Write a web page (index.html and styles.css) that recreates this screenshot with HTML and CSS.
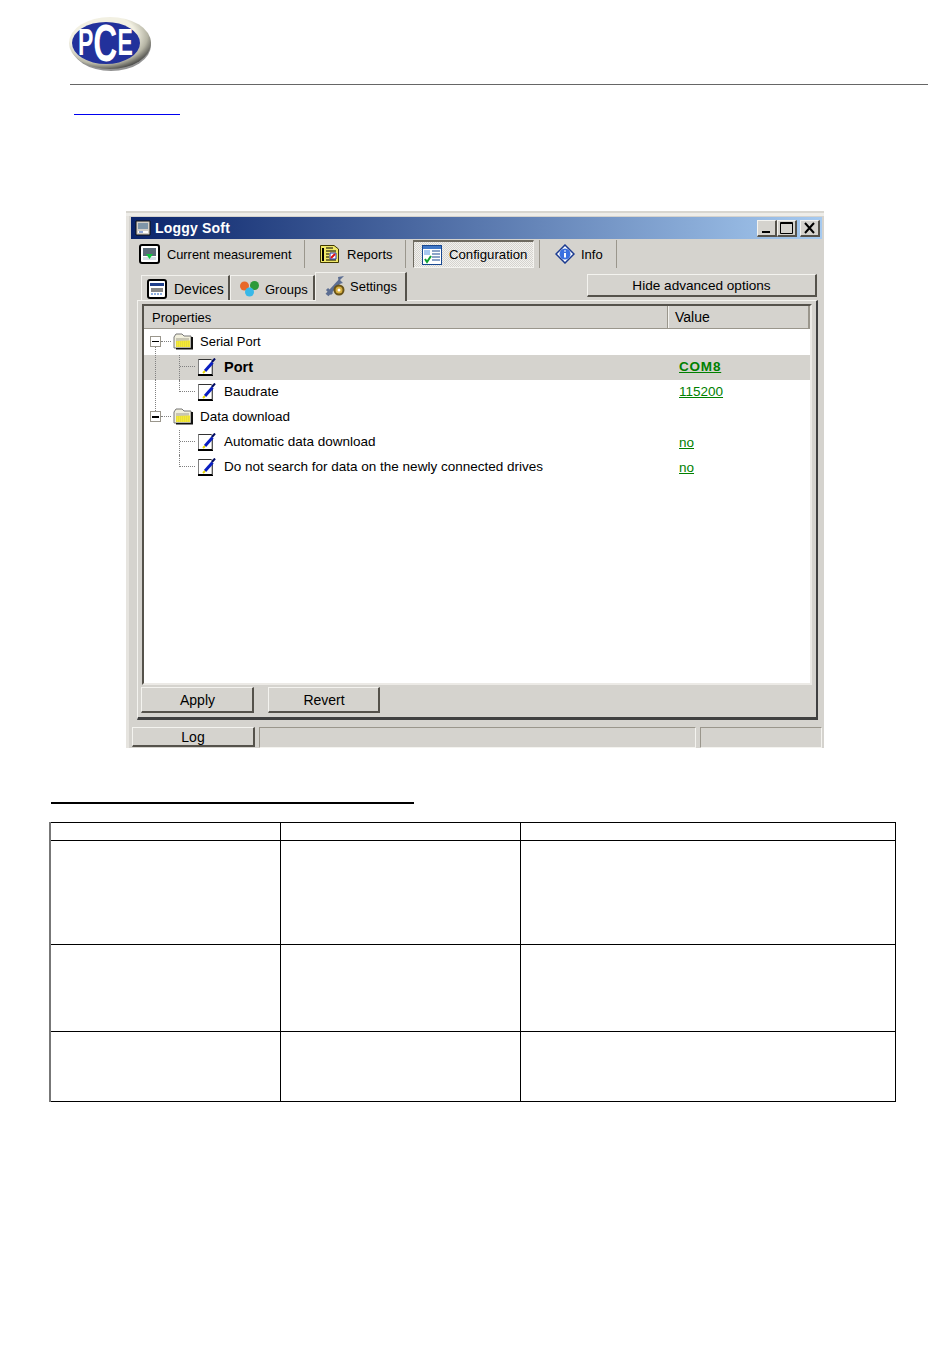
FILE: index.html
```html
<!DOCTYPE html>
<html lang="en">
<head>
<meta charset="utf-8">
<title>Loggy Soft</title>
<link rel="stylesheet" href="styles.css">
</head>
<body>
<svg class="defs" width="0" height="0" aria-hidden="true">
  <defs>
    <symbol id="doc" viewBox="0 0 18 18">
      <path d="M0.500 1.500H14V16.500H0.500Z" fill="#fff" stroke="#808080"/>
      <path d="M0 17H15" stroke="#000" stroke-width="2"/>
      <path d="M14.500 5V17" stroke="#555"/>
      <path d="M0.500 1.500H13" stroke="#333"/>
      <path d="M7 13L14.500 4.500" stroke="#0a1fc0" stroke-width="3"/>
      <path d="M14 4L17 0.500" stroke="#000a60" stroke-width="2"/>
      <path d="M5 15L7 13" stroke="#e8d800" stroke-width="2"/>
    </symbol>
    <symbol id="folder" viewBox="0 0 20 17">
      <path d="M1 4L3 1H9L11 3H18V15H1Z" fill="#f1efdc" stroke="#777"/>
      <path d="M3 5H16V8H3Z" fill="#c8c6b4"/>
      <path d="M3 8L17 7.500V14H3Z" fill="#f5ea35"/>
      <path d="M3 9H17M3 11H17M3 13H17" stroke="#d8cf40" stroke-dasharray="1 1"/>
      <path d="M18 4H20V16.500H3V15H18Z" fill="#111"/>
    </symbol>
  </defs>
</svg>

<header class="doc-head">
  <svg class="logo" width="120" height="60" viewBox="0 0 120 60" role="img" aria-label="PCE">
    <defs>
      <radialGradient id="rim" cx="40%" cy="35%" r="68%">
        <stop offset="0.6" stop-color="#f2f0e2"/>
        <stop offset="0.82" stop-color="#b5b4a4"/>
        <stop offset="1" stop-color="#4a4a48"/>
      </radialGradient>
    </defs>
    <ellipse cx="43" cy="30" rx="40" ry="26" fill="#3a3a3a" opacity=".55"/>
    <ellipse cx="42" cy="28" rx="41" ry="26" fill="url(#rim)"/>
    <ellipse cx="38" cy="28" rx="34" ry="21" fill="#22319b"/>
    <text class="logo-text" transform="translate(10 40) scale(.64 1)">P<tspan class="logo-big" dy="6">C</tspan><tspan dy="-6">E</tspan></text>
  </svg>
  <hr class="head-rule">
  <a class="head-link" href="#" aria-label="link"></a>
</header>

<main class="shot">
  <div class="window">
    <div class="titlebar">
      <svg class="app-icon" width="16" height="16" viewBox="0 0 16 16"><path d="M1 1H15V15H1Z" fill="#d4d0c8" stroke="#111"/><path d="M3 3H13V9H3Z" fill="#7f96a8"/><path d="M3 11H13V13H3Z" fill="#fff"/><path d="M4 12H8" stroke="#2050b0"/></svg>
      <span class="title">Loggy Soft</span>
      <div class="winbtns">
        <button class="winbtn"><svg width="17" height="14" viewBox="0 0 17 14"><path d="M4 11H12" stroke="#000" stroke-width="2"/></svg></button>
        <button class="winbtn"><svg width="17" height="14" viewBox="0 0 17 14"><path d="M2.500 1.500H14.500V12.500H2.500Z M2 2.500H15" fill="none" stroke="#000"/></svg></button>
        <button class="winbtn gap"><svg width="17" height="14" viewBox="0 0 17 14"><path d="M4 2L13 12M13 2L4 12" stroke="#000" stroke-width="2"/></svg></button>
      </div>
    </div>

    <nav class="toolbar">
      <div class="tool t-current">
        <svg width="21" height="20" viewBox="0 0 21 20"><rect x="1" y="1" width="19" height="18" rx="2" fill="#fff" stroke="#000" stroke-width="2"/><path d="M4 4H17V12H4Z" fill="#5a6a78"/><path d="M4 13H17V16H4Z" fill="#d8e0e8"/><path d="M7 10H14L10.500 15Z" fill="#10c040"/></svg>
        <span>Current measurement</span>
      </div>
      <div class="tool t-reports">
        <svg width="21" height="20" viewBox="0 0 21 20"><path d="M1.500 1.500H15L19.500 5V18.500H1.500Z" fill="#f0e868" stroke="#403800"/><path d="M4 4V17" stroke="#000" stroke-width="2"/><path d="M7 4H14M7 7H17M7 10H10M7 13H10M7 16H17" stroke="#000"/><path d="M11 9H17V15H11Z" fill="#fff" stroke="#2030b0"/><path d="M12 14L16 10" stroke="#e01010" stroke-width="2"/></svg>
        <span>Reports</span>
      </div>
      <div class="tool t-config">
        <svg width="20" height="20" viewBox="0 0 20 20"><rect x="0.500" y="0.500" width="19" height="19" fill="#fff" stroke="#184890"/><path d="M1 1H19V4H1Z" fill="#4078c8"/><path d="M2 5H8V10H2Z" fill="#a8c8f0"/><path d="M10 6H18M10 9H18M10 12H18M10 15H18" stroke="#184890"/><path d="M3 14L5 17L9 11" fill="none" stroke="#10a030" stroke-width="2"/></svg>
        <span>Configuration</span>
      </div>
      <div class="tool t-info">
        <svg width="20" height="20" viewBox="0 0 20 20"><path d="M10 1L19 10L10 19L1 10Z" fill="#fff" stroke="#1a3a90" stroke-width="1.500"/><circle cx="10" cy="10" r="5.500" fill="#3a70e0"/><path d="M10 6.500V7.500M10 9V13.500" stroke="#fff" stroke-width="2"/></svg>
        <span>Info</span>
      </div>
    </nav>

    <div class="tabrow">
      <div class="tab tab-devices">
        <svg width="20" height="20" viewBox="0 0 20 20"><rect x="1" y="1" width="18" height="18" rx="2" fill="#fff" stroke="#000" stroke-width="2"/><path d="M3 4H17V7H3Z" fill="#20408c"/><path d="M4 9H16V13H4Z" fill="#888"/><path d="M4 15H16" stroke="#2060c0" stroke-dasharray="2 1"/></svg>
        <span>Devices</span>
      </div>
      <div class="tab tab-groups">
        <svg width="21" height="18" viewBox="0 0 21 18"><circle cx="5.500" cy="6" r="4.500" fill="#e8682a"/><circle cx="15.500" cy="5.500" r="4.500" fill="#2e9a3a"/><circle cx="10.500" cy="12" r="4.500" fill="#38b8e8"/></svg>
        <span>Groups</span>
      </div>
      <div class="tab tab-settings">
        <svg width="21" height="23" viewBox="0 0 21 23"><path d="M2 20L15 6" stroke="#5c6e92" stroke-width="4"/><path d="M13 2L19 1L15 5L18 8L14 9Z" fill="#5c6e92"/><path d="M2 14L7 19" stroke="#5c6e92" stroke-width="3"/><circle cx="14" cy="15" r="4.500" fill="#d8b040" stroke="#6a5418" stroke-width="2"/><circle cx="14" cy="15" r="1.500" fill="#fff"/></svg>
        <span>Settings</span>
      </div>
      <button class="btn btn-advanced">Hide advanced options</button>
    </div>

    <section class="panel">
      <div class="list">
        <div class="list-head">
          <div class="col-prop">Properties</div>
          <div class="col-val">Value</div>
        </div>
        <div class="tree">
          <div class="row root first">
            <div class="name"><span class="exp"></span><svg class="fold" width="20" height="17"><use href="#folder"/></svg><span class="label-root narrow">Serial Port</span></div>
          </div>
          <div class="row sel">
            <div class="name"><span class="trunk on"></span><span class="elbow"></span><svg class="item" width="18" height="18"><use href="#doc"/></svg><span class="label strong">Port</span></div>
            <div class="val strong-val"><a href="#">COM8</a></div>
          </div>
          <div class="row">
            <div class="name"><span class="trunk on"></span><span class="elbow last"></span><svg class="item" width="18" height="18"><use href="#doc"/></svg><span class="label">Baudrate</span></div>
            <div class="val"><a href="#">115200</a></div>
          </div>
          <div class="row root second">
            <div class="name"><span class="exp"></span><svg class="fold" width="20" height="17"><use href="#folder"/></svg><span class="label-root">Data download</span></div>
          </div>
          <div class="row">
            <div class="name"><span class="trunk"></span><span class="elbow"></span><svg class="item" width="18" height="18"><use href="#doc"/></svg><span class="label">Automatic data download</span></div>
            <div class="val val-no"><a href="#">no</a></div>
          </div>
          <div class="row">
            <div class="name"><span class="trunk"></span><span class="elbow last"></span><svg class="item" width="18" height="18"><use href="#doc"/></svg><span class="label">Do not search for data on the newly connected drives</span></div>
            <div class="val val-no"><a href="#">no</a></div>
          </div>
        </div>
      </div>
      <div class="actions">
        <button class="btn btn-act">Apply</button>
        <button class="btn btn-act">Revert</button>
      </div>
    </section>

    <footer class="status">
      <button class="btn btn-log">Log</button>
      <div class="well well-main"></div>
      <div class="well well-side"></div>
    </footer>
  </div>
</main>

<h2 class="blank-heading" aria-hidden="true"></h2>

<table class="spec">
  <tr class="r0"><td class="c1"></td><td class="c2"></td><td class="c3"></td></tr>
  <tr class="r1"><td></td><td></td><td></td></tr>
  <tr class="r2"><td></td><td></td><td></td></tr>
  <tr class="r3"><td></td><td></td><td></td></tr>
</table>
</body>
</html>
```

FILE: styles.css
```css
* { box-sizing: border-box; }
html, body { margin: 0; padding: 0; background: #fff; }
body { width: 950px; height: 1361px; overflow: hidden; font-family: "Liberation Sans", Arial, sans-serif; font-size: 14px; color: #000; }
.defs { display: block; height: 0; }
svg { display: block; flex: none; }

.doc-head { height: 211px; padding-top: 15px; }
.logo { margin-left: 68px; height: 60px; }
.logo-text { font-family: "Liberation Sans", Arial, sans-serif; font-weight: 700; font-size: 36px; fill: #fff; }
.logo-big { font-size: 52px; }
.head-rule { height: 1px; border: 0; background: #666; margin: 9px 22px 0 70px; }
.head-link { display: block; width: 106px; height: 1px; margin: 29px 0 0 74px; background: #0000f0; }

.shot { padding-left: 126px; }
.window { width: 698px; height: 537px; padding: 4px 2px 0 5px; background: #d5d3ce; border-top: 2px solid #d8d6d0; box-shadow: inset 0 3px 0 #eeede9, inset 3px 0 0 #e6e4df; }

.titlebar { display: flex; align-items: center; height: 22px; padding-left: 4px; background: linear-gradient(90deg, #0a246a, #a6caf0); color: #fff; }
.title { margin-left: 4px; font-weight: 700; font-size: 14px; letter-spacing: .2px; }
.winbtns { display: flex; margin-left: auto; padding-right: 2px; }
.winbtn { display: flex; width: 20px; height: 17px; padding: 0; background: #d5d3ce; border: 1px solid; border-color: #f4f3ef #55524b #55524b #f4f3ef; border-width: 1px 2px 2px 1px; }
.winbtn.gap { margin-left: 3px; }

.toolbar { display: flex; height: 28px; margin-top: 1px; font-size: 13px; }
.tool { display: flex; align-items: center; height: 28px; border-right: 1px solid #9a968c; }
.tool span { white-space: nowrap; }
.t-current { width: 174px; padding-left: 8px; }
.t-current span { margin-left: 7px; font-size: 12.8px; }
.t-reports { width: 101px; padding-left: 14px; }
.t-reports span { margin-left: 7px; }
.t-config { width: 121px; margin-left: 7px; padding-left: 8px; border: 1px solid; border-color: #6e6a60 #f4f3ef #f4f3ef #6e6a60; border-top-width: 2px; background: repeating-conic-gradient(#f2f1ee 0 25%, #d5d3ce 0 50%) 0 0 / 2px 2px; }
.t-config span { margin-left: 7px; font-size: 13.2px; }
.t-info { width: 77px; margin-left: 6px; padding-left: 15px; box-shadow: -1px 0 0 #9a968c; }
.t-info span { margin-left: 6px; }

.tabrow { display: flex; align-items: flex-end; height: 27px; margin-top: 5px; padding-left: 10px; font-size: 13px; }
.tab { display: flex; align-items: center; height: 25px; padding-top: 2px; border-top: 1px solid #f2f1ed; border-left: 1px solid #f2f1ed; border-right: 2px solid #55524b; }
.tab span { white-space: nowrap; }
.tab-devices { width: 89px; padding-left: 5px; font-size: 14px; }
.tab-devices span { margin-left: 7px; }
.tab-groups { width: 85px; padding-left: 8px; }
.tab-groups span { margin-left: 5px; }
.tab-settings { position: relative; z-index: 1; width: 92px; height: 29px; margin-bottom: -1px; padding: 0 0 1px 9px; background: #d5d3ce; }
.tab-settings span { margin-left: 4px; }

.btn { display: block; padding: 0; background: #d5d3ce; font: inherit; color: #000; border: 1px solid; border-color: #f4f3ef #55524b #55524b #f4f3ef; border-width: 1px 2px 2px 1px; text-align: center; }
.btn-advanced { width: 230px; height: 23px; margin: 0 0 3px 180px; font-size: 13.6px; }

.panel { width: 681px; height: 420px; margin-left: 6px; padding: 3px 2px 0 4px; border: 1px solid; border-color: #f4f3ef #404040 #404040 #f4f3ef; border-width: 1px 2px 3px 1px; }
.list { width: 670px; height: 381px; border: 2px solid; border-color: #55524b #eceae6 #eceae6 #55524b; background: #fff; font-size: 13.5px; }
.list-head { display: flex; height: 23px; background: #d5d3ce; border-bottom: 1px solid #9a968c; line-height: 19px; }
.col-prop { width: 524px; padding: 2px 0 0 8px; font-size: 13px; border-right: 1px solid #9a968c; box-shadow: 1px 0 0 #f4f3ef; }
.col-val { flex: 1; padding: 2px 0 0 7px; font-size: 14px; border-right: 2px solid #9a968c; }
.tree { padding-top: 1px; }
.row { display: flex; height: 25px; align-items: stretch; }
.row.sel { background: #d5d3ce; }
.name { display: flex; align-items: center; width: 524px; padding-bottom: 2px; white-space: nowrap; }
.val { padding: 2px 0 0 11px; line-height: 19px; }
.val-no { padding-top: 3px; }
.val a { color: #008000; text-decoration: underline; }
.strong-val a { font-weight: 700; letter-spacing: .8px; }
.exp { position: relative; width: 11px; height: 11px; margin-left: 6px; border: 1px solid #9a968c; background: linear-gradient(#000, #000) center / 7px 1px no-repeat #fff; }
.second .exp { background-size: 7px 2px; }
.exp::after { content: ""; position: absolute; left: 10px; top: 4px; width: 10px; border-top: 1px dotted #808080; }
.first .exp::before { content: ""; position: absolute; left: 4px; top: 10px; height: 9px; border-left: 1px dotted #808080; }
.second .exp::before { content: ""; position: absolute; left: 4px; top: -8px; height: 7px; border-left: 1px dotted #808080; }
.fold { margin-left: 12px; }
.label-root { margin-left: 7px; }
.narrow { font-size: 13px; }
.trunk { align-self: stretch; width: 24px; margin: 0 0 -2px 11px; }
.trunk.on { border-left: 1px dotted #808080; }
.elbow { position: relative; align-self: stretch; width: 16px; margin-bottom: -2px; border-left: 1px dotted #808080; }
.elbow.last { align-self: flex-start; height: 12px; margin-bottom: 0; }
.elbow::after { content: ""; position: absolute; left: 0; top: 11px; width: 15px; border-top: 1px dotted #808080; }
.item { margin-left: 3px; }
.label { margin-left: 8px; }
.strong { font-weight: 700; font-size: 14.5px; }

.actions { display: flex; margin-top: 2px; }
.btn-act { width: 113px; height: 26px; margin-left: -1px; padding-left: 1px; }
.btn-act + .btn-act { width: 112px; margin-left: 14px; }

.status { display: flex; height: 21px; margin-top: 7px; padding-left: 1px; }
.btn-log { width: 123px; height: 20px; }
.well { height: 21px; border: 1px solid; border-color: #9a968c #f4f3ef #f4f3ef #9a968c; }
.well-main { width: 437px; margin-left: 4px; }
.well-side { width: 122px; margin-left: 4px; }

.blank-heading { width: 363px; height: 2px; margin: 54px 0 0 51px; background: #000; }

.spec { width: 847px; margin: 18px 0 0 49px; border-collapse: collapse; table-layout: fixed; border: 1px solid #000; border-left: 2px solid #777; }
.spec td { padding: 0; border: 1px solid #000; }
.c1 { width: 230px; }
.c2 { width: 240px; }
.r0 { height: 18px; }
.r1 { height: 104px; }
.r2 { height: 87px; }
.r3 { height: 70px; }
```
